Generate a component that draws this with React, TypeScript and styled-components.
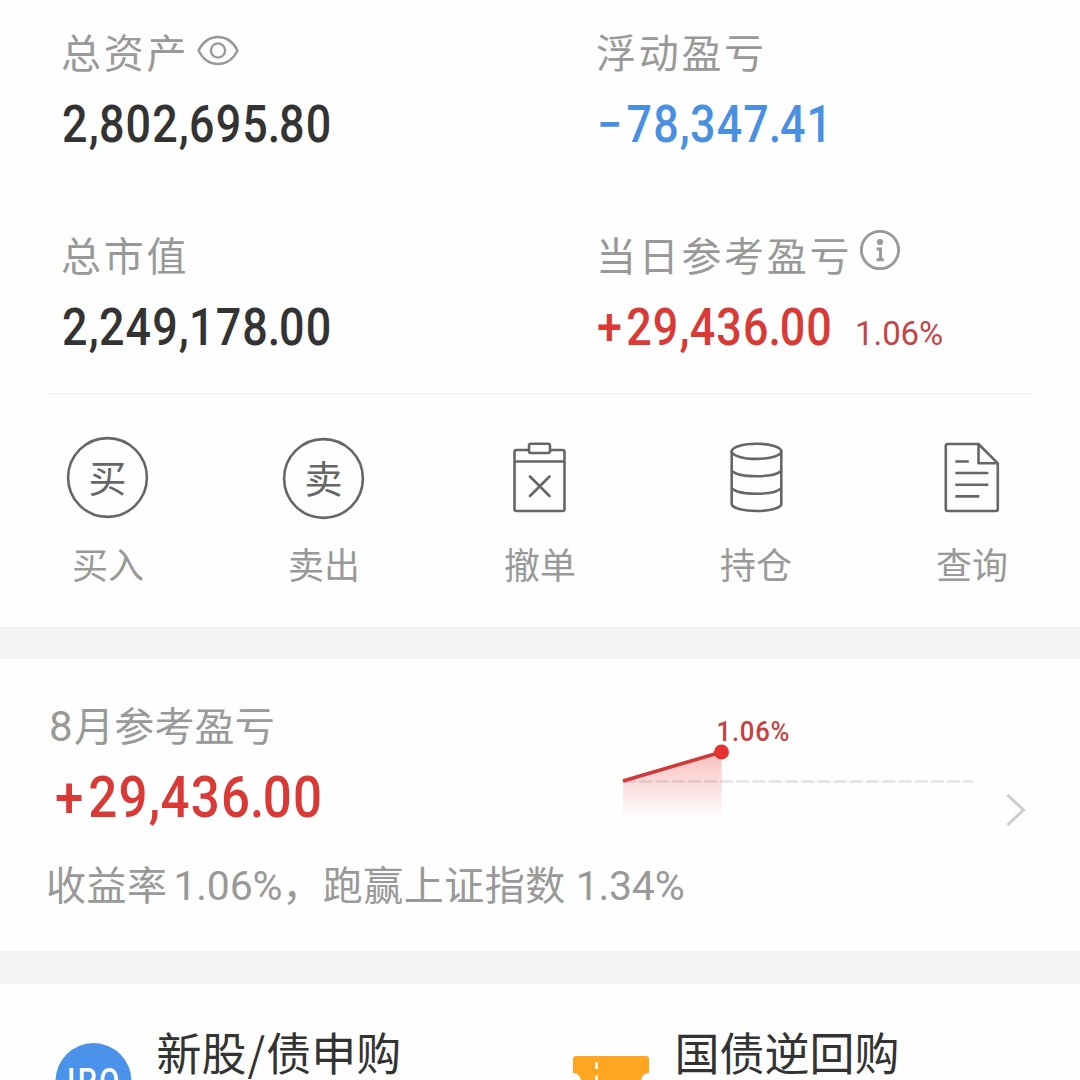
import React from "react";
import styled, { createGlobalStyle } from "styled-components";

const cjk = '"Noto Sans CJK SC", sans-serif';
const digits = 'Roboto, "Liberation Sans", sans-serif';

const GlobalStyle = createGlobalStyle`
  * { box-sizing: border-box; }
  html, body { margin: 0; background: #fff; overflow: hidden; }
`;

const Page = styled.main`
  width: 1080px;
  height: 1080px;
  overflow: hidden;
  background: #fefefe;
  font-family: ${cjk};
  display: flex;
  flex-direction: column;
`;

const Summary = styled.section`
  flex: none;
  height: 627px;
  display: flex;
  flex-direction: column;
`;

const Metrics = styled.div`
  display: grid;
  grid-template-columns: 535px 1fr;
  grid-auto-rows: 203px;
  height: 393px;
  padding: 26px 0 0 61px;
`;

const Label = styled.div`
  display: flex;
  height: 48px;
  font-size: 40px;
  line-height: 50px;
  letter-spacing: 2.7px;
  color: #999;
  white-space: nowrap;
`;

const EyeIcon = styled.svg`
  width: 44px;
  height: 36px;
  margin: 7px 0 0 6.5px;
`;

const InfoIcon = styled.svg`
  width: 42px;
  height: 42px;
  margin: 0 0 0 6.5px;
`;

const ValueRow = styled.div`
  display: flex;
  align-items: baseline;
  margin-top: 21px;
  padding-left: 0.5px;
  line-height: 60px;
  font-family: ${digits};
`;

const FigureText = styled.span<{ $color: string; $size: number }>`
  display: inline-block;
  font-family: ${digits};
  font-weight: 500;
  font-size: ${(p) => p.$size}px;
  letter-spacing: 0.025em;
  color: ${(p) => p.$color};
  white-space: nowrap;
  transform: scaleX(0.88);
  transform-origin: left;
`;

const Sign = styled.span`
  margin-right: 0.07em;
`;

const Comma = styled.span`
  margin-right: -0.02em;
`;

const Point = styled.span`
  margin: 0 -0.055em 0 -0.025em;
`;

function Figure({ value, color, size = 51 }: { value: string; color: string; size?: number }) {
  return (
    <FigureText $color={color} $size={size}>
      {value.split(/([+−,.])/).map((part, i) => {
        if (part === "+" || part === "−") return <Sign key={i}>{part}</Sign>;
        if (part === ",") return <Comma key={i}>,</Comma>;
        if (part === ".") return <Point key={i}>.</Point>;
        return part;
      })}
    </FigureText>
  );
}

const Rate = styled.span`
  margin-left: -9.5px;
  font-size: 33px;
  letter-spacing: -0.1px;
  color: #c44545;
`;

const Divider = styled.hr`
  flex: none;
  width: 986px;
  height: 1px;
  margin: 0 auto;
  border: 0;
  background: #ececec;
`;

const Actions = styled.nav`
  display: grid;
  grid-template-columns: repeat(5, 1fr);
  padding-top: 42px;
`;

const Action = styled.div`
  display: flex;
  flex-direction: column;
  align-items: center;
  font-size: 36px;
  line-height: 44px;
  color: #999;
`;

const ActionIcon = styled.svg`
  width: 84px;
  height: 84px;
  margin-bottom: 21px;
  fill: none;
  stroke: #666;
  stroke-width: 2.6;
  stroke-linejoin: round;
  stroke-linecap: round;
  text {
    fill: #666;
    stroke: none;
    font: 400 38px ${cjk};
  }
`;

const Band = styled.div<{ $height: number }>`
  flex: none;
  height: ${(p) => p.$height}px;
  background: #f4f4f4;
`;

const Monthly = styled.section`
  flex: none;
  height: 292px;
  padding: 40px 46px 0 46px;
  display: grid;
  grid-template-columns: 567px 1fr auto;
  grid-template-rows: 160px auto;
`;

const MonthTitle = styled.div`
  padding-left: 3px;
  height: 48px;
  font-size: 40px;
  line-height: 50px;
  letter-spacing: 0.2px;
  color: #999;
`;

const MonthNumber = styled.span`
  display: inline-block;
  width: 25px;
  font-family: ${digits};
  font-size: 42px;
  line-height: 48px;
`;

const MonthFigure = styled.div`
  margin-top: 17px;
  padding-left: 9px;
  line-height: 66px;
`;

const TrendChart = styled.svg`
  width: 370px;
  height: 130px;
  margin-top: 6px;
  text {
    font: 500 28.5px ${digits};
  }
`;

const Chevron = styled.svg`
  width: 30px;
  height: 40px;
  margin-top: 91px;
`;

const Comparison = styled.p`
  grid-column: 1 / -1;
  margin: 0;
  height: 48px;
  font-size: 40px;
  line-height: 49px;
  letter-spacing: 0.5px;
  color: #999;
  white-space: nowrap;
`;

const Percent = styled.span<{ $left: number }>`
  margin-left: ${(p) => p.$left}px;
  font-family: ${digits};
  font-size: 41px;
  letter-spacing: -0.25px;
`;

const Products = styled.section`
  flex: 1;
  min-height: 0;
  display: grid;
  grid-template-columns: 518px 1fr;
  padding: 39px 0 0 54px;
`;

const Product = styled.div`
  display: flex;
  font-size: 45px;
  line-height: 57px;
  color: #333;
  white-space: nowrap;
`;

const Slash = styled.span`
  margin: 0 1px;
`;

const ProductIcon = styled.svg`
  flex: none;
  width: 78px;
  height: 78px;
  margin: 19px 24.5px 0 0;
  text {
    font: 500 36px ${digits};
    letter-spacing: 3px;
  }
`;

const red = "#d93a36";

const actions = [
  {
    label: "买入",
    icon: (
      <>
        <circle cx="41.5" cy="41.5" r="39.4" />
        <text x="41.5" y="56" textAnchor="middle">买</text>
      </>
    ),
  },
  {
    label: "卖出",
    icon: (
      <>
        <circle cx="41.5" cy="42.5" r="39.4" />
        <text x="41.5" y="57" textAnchor="middle">卖</text>
      </>
    ),
  },
  {
    label: "撤单",
    icon: (
      <>
        <path d="M31 14H18.500a2 2 0 0 0-2 2V73a2 2 0 0 0 2 2h46a2 2 0 0 0 2-2V16a2 2 0 0 0-2-2H52M16.500 25.500h50M32 40.500l19.500 19.500M51.500 40.500L32 60" />
        <rect x="31" y="7.800" width="21" height="9.200" rx="2" />
      </>
    ),
  },
  {
    label: "持仓",
    icon: (
      <>
        <ellipse cx="42.500" cy="15.300" rx="24.800" ry="7.600" />
        <path d="M17.700 15.500V68.500C19 72.500 30 75 42.500 75S66 72.500 67.300 68.500V15.500M17.700 34.700C21.500 38.400 31 40.200 42.500 40.200S63.500 38.400 67.300 34.700M17.700 52.200C21.500 55.900 31 57.700 42.500 57.700S63.500 55.900 67.300 52.200" />
      </>
    ),
  },
  {
    label: "查询",
    icon: (
      <>
        <path d="M48.500 8H17.800a2 2 0 0 0-2 2v63a2 2 0 0 0 2 2h48a2 2 0 0 0 2-2V27.300zV27.300H67.800" />
        <path strokeLinecap="butt" d="M25.300 25.500h13.500M25.300 37h33M25.300 48.800h33M25.300 60.400h24" />
      </>
    ),
  },
];

export default function App() {
  return (
    <Page>
      <GlobalStyle />
      <Summary>
        <Metrics>
          <div>
            <Label>
              总资产
              <EyeIcon viewBox="0 0 44 36" fill="none" stroke="#999" strokeWidth="2.4">
                <path d="M2.500 17.500C7 8.500 14 4 22 4s15 4.500 19.500 13.500C37 26.500 30 31 22 31S7 26.500 2.500 17.500z" strokeLinejoin="round" />
                <circle cx="22" cy="17.500" r="7.100" />
              </EyeIcon>
            </Label>
            <ValueRow><Figure color="#333" value="2,802,695.80" /></ValueRow>
          </div>
          <div>
            <Label>浮动盈亏</Label>
            <ValueRow><Figure color="#4a90e2" value="−78,347.41" /></ValueRow>
          </div>
          <div>
            <Label>总市值</Label>
            <ValueRow><Figure color="#333" value="2,249,178.00" /></ValueRow>
          </div>
          <div>
            <Label>
              当日参考盈亏
              <InfoIcon viewBox="0 0 42 42" fill="none" stroke="#999" strokeWidth="2.800">
                <circle cx="21" cy="21" r="18.600" />
                <circle cx="21" cy="13" r="3.100" fill="#999" stroke="none" />
                <path d="M17.600 20h3.900v10.500M17.600 30.800h7.200" strokeWidth="3" />
              </InfoIcon>
            </Label>
            <ValueRow>
              <Figure color={red} value="+29,436.00" />
              <Rate>1.06%</Rate>
            </ValueRow>
          </div>
        </Metrics>
        <Divider />
        <Actions>
          {actions.map((a) => (
            <Action key={a.label}>
              <ActionIcon viewBox="0 0 84 84">{a.icon}</ActionIcon>
              {a.label}
            </Action>
          ))}
        </Actions>
      </Summary>
      <Band $height={32} />
      <Monthly>
        <div>
          <MonthTitle><MonthNumber>8</MonthNumber>月参考盈亏</MonthTitle>
          <MonthFigure><Figure color={red} size={58} value="+29,436.00" /></MonthFigure>
        </div>
        <TrendChart viewBox="613 705 370 130">
          <defs>
            <linearGradient id="fade" x1="0" y1="752" x2="0" y2="820" gradientUnits="userSpaceOnUse">
              <stop offset="0" stopColor="#ee3a3a" stopOpacity="0.320" />
              <stop offset="1" stopColor="#ee3a3a" stopOpacity="0" />
            </linearGradient>
          </defs>
          <path d="M623 781.500H973" stroke="#e2e2e2" strokeWidth="2.400" strokeDasharray="13 3.200" />
          <path d="M623 781L721.500 752V820H623z" fill="url(#fade)" />
          <path d="M623 781L721.500 752" stroke="#d23a3a" strokeWidth="3.600" />
          <circle cx="721.500" cy="752" r="7.500" fill="#e63232" />
          <text transform="translate(716.500 741) scale(0.900 1)" letterSpacing="0.900" fill="#c94040">1.06%</text>
        </TrendChart>
        <Chevron viewBox="0 0 30 40" fill="none" stroke="#ccc" strokeWidth="3">
          <path d="M3.500 5L19.500 20L3.500 35" />
        </Chevron>
        <Comparison>
          收益率<Percent $left={6}>1.06%</Percent>，跑赢上证指数<Percent $left={10}>1.34%</Percent>
        </Comparison>
      </Monthly>
      <Band $height={33} />
      <Products>
        <Product>
          <ProductIcon viewBox="0 0 78 78">
            <circle cx="39.500" cy="39" r="38" fill="#4a92ea" />
            <text transform="translate(13 51) scale(0.820 1)" fill="#fff">IPO</text>
          </ProductIcon>
          <span>新股<Slash>/</Slash>债申购</span>
        </Product>
        <Product>
          <ProductIcon viewBox="0 0 78 78">
            <path d="M4 14H74a3 3 0 0 1 3 3v14a8 8 0 0 0 0 16v14H1V47a8 8 0 0 0 0-16V17a3 3 0 0 1 3-3z" fill="#ffa51f" />
            <path d="M24.500 20v50" stroke="#fff" strokeWidth="2.600" strokeDasharray="7 6.500" />
          </ProductIcon>
          国债逆回购
        </Product>
      </Products>
    </Page>
  );
}
